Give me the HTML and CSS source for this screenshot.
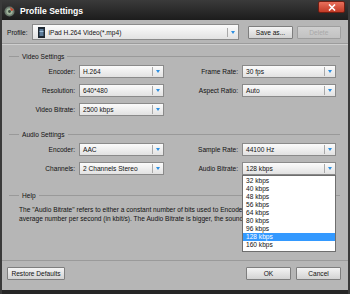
FILE: index.html
```html
<!DOCTYPE html>
<html lang="en">
<head>
    <meta charset="UTF-8">
    <title>Profile Settings</title>
    <link rel="stylesheet" href="styles.css">
</head>
<body>
<div class="window">
    <!-- Title bar -->
    <div class="titlebar">
        <svg class="app-icon" width="11" height="11" viewBox="0 0 11 11">
            <circle cx="5.5" cy="5.5" r="5" fill="#6b7a6e"/>
            <circle cx="5.5" cy="5.5" r="3.2" fill="#9fb39a"/>
            <circle cx="5.5" cy="5.5" r="1.4" fill="#3b4a3e"/>
            <path d="M6 1 L10 4 L7 5 Z" fill="#c9402a"/>
        </svg>
        <span class="title">Profile Settings</span>
        <div class="close-btn">
            <svg width="8" height="7" viewBox="0 0 8 7"><path d="M1 0.5 L7 6.5 M7 0.5 L1 6.5" stroke="#fff" stroke-width="1.6"/></svg>
        </div>
    </div>

    <div class="content">
        <!-- Profile -->
        <div class="profile-row">
            <span class="label">Profile:</span>
            <div class="select profile-select">
                <svg class="film" width="7" height="11" viewBox="0 0 7 11">
                    <rect width="7" height="11" fill="#1d2630"/>
                    <rect x="1.5" y="2" width="4" height="7" fill="#5b7a98"/>
                    <rect x="1.5" y="4" width="4" height="1" fill="#9fc0dc"/>
                </svg>
                <span class="value">iPad H.264 Video(*.mp4)</span>
                <span class="arrow"></span>
            </div>
            <button class="btn">Save as...</button>
            <button class="btn" disabled>Delete</button>
        </div>

        <!-- Video -->
        <div class="group">
            <div class="group-head"><span>Video Settings</span></div>
            <div class="grid">
                <span class="label">Encoder:</span>
                <div class="select"><span class="value">H.264</span><span class="arrow"></span></div>
                <span class="label">Frame Rate:</span>
                <div class="select"><span class="value">30 fps</span><span class="arrow"></span></div>

                <span class="label">Resolution:</span>
                <div class="select"><span class="value">640*480</span><span class="arrow"></span></div>
                <span class="label">Aspect Ratio:</span>
                <div class="select"><span class="value">Auto</span><span class="arrow"></span></div>

                <span class="label">Video Bitrate:</span>
                <div class="select"><span class="value">2500 kbps</span><span class="arrow"></span></div>
            </div>
        </div>

        <!-- Audio -->
        <div class="group audio">
            <div class="group-head"><span>Audio Settings</span></div>
            <div class="grid">
                <span class="label">Encoder:</span>
                <div class="select"><span class="value">AAC</span><span class="arrow"></span></div>
                <span class="label">Sample Rate:</span>
                <div class="select"><span class="value">44100 Hz</span><span class="arrow"></span></div>

                <span class="label">Channels:</span>
                <div class="select"><span class="value">2 Channels Stereo</span><span class="arrow"></span></div>
                <span class="label">Audio Bitrate:</span>
                <div class="select open">
                    <span class="value">128 kbps</span><span class="arrow"></span>
                    <ul class="dropdown">
                        <li>32 kbps</li>
                        <li>40 kbps</li>
                        <li>48 kbps</li>
                        <li>56 kbps</li>
                        <li>64 kbps</li>
                        <li>80 kbps</li>
                        <li>96 kbps</li>
                        <li class="selected">128 kbps</li>
                        <li>160 kbps</li>
                    </ul>
                </div>
            </div>
        </div>

        <!-- Help -->
        <div class="group help">
            <div class="group-head"><span>Help</span></div>
            <p class="help-text">The "Audio Bitrate" refers to either a constant number of bits used to Encode, or an<br>average number per second (in kbit/s). The Audio Bitrate is bigger, the sound quality is better.</p>
        </div>
    </div>

    <!-- Footer -->
    <div class="footer">
        <button class="btn wide">Restore Defaults</button>
        <div class="spacer"></div>
        <button class="btn">OK</button>
        <button class="btn">Cancel</button>
    </div>
</div>
</body>
</html>
```

FILE: styles.css
```css
body {
    margin: 0;
    background: #1e1e1e;
    font-family: "Liberation Sans", Arial, sans-serif;
    font-size: 6.6px;
    color: #111;
}
.window {
    width: 350px;
    height: 294px;
    display: flex;
    flex-direction: column;
    background: #b6b6b6;
    border-left: 2px solid #3a3a3a;
    border-right: 2px solid #3a3a3a;
    box-sizing: border-box;
    overflow: hidden;
}
.titlebar {
    height: 20px;
    flex: none;
    display: flex;
    align-items: center;
    margin: 0 -2px;
    padding: 0 4px;
    background: linear-gradient(#3a3a3a, #1c1c1c);
    position: relative;
}
.app-icon {
    margin-top: 2px;
}
.title {
    margin-left: 5px;
    color: #fff;
    font-weight: bold;
    font-size: 8.6px;
    margin-top: 1px;
}
.close-btn {
    position: absolute;
    right: 5px;
    top: 1px;
    width: 27px;
    height: 12px;
    border-radius: 2px;
    background: linear-gradient(#e8705c, #c13a26);
    border: 1px solid #6e1d12;
    box-sizing: border-box;
    display: flex;
    align-items: center;
    justify-content: center;
}
.content {
    flex: 1;
    display: flex;
    flex-direction: column;
}
.profile-row {
    display: flex;
    align-items: center;
    height: 22px;
    padding: 1px 7px 0 5px;
    border-bottom: 1px solid #9c9c9c;
    box-shadow: 0 1px 0 #cfcfcf;
}
.profile-row .label {
    margin-right: 4px;
}
.select {
    height: 13px;
    display: flex;
    align-items: center;
    background: linear-gradient(#fbfbfb, #e2e2e2);
    border: 1px solid #8a8a8a;
    box-sizing: border-box;
    position: relative;
}
.select .value {
    flex: 1;
    padding-left: 3px;
    white-space: nowrap;
}
.select .arrow {
    width: 10px;
    height: 9px;
    border-left: 1px solid #a9a9a9;
    position: relative;
}
.select .arrow::after {
    content: "";
    position: absolute;
    left: 3px;
    top: 3px;
    border-left: 2.5px solid transparent;
    border-right: 2.5px solid transparent;
    border-top: 3px solid #2d8fe0;
}
.profile-select {
    width: 211px;
    height: 16px;
    margin-right: 5px;
}
.profile-select .film {
    margin-left: 5px;
}
.profile-select .value {
    padding-left: 4px;
}
.btn {
    font-family: inherit;
    font-size: 6.6px;
    color: #111;
    width: 45px;
    height: 13px;
    padding: 0;
    margin-left: 4px;
    background: linear-gradient(#f4f4f4, #d3d3d3);
    border: 1px solid #7e7e7e;
    border-radius: 1px;
}
.btn:disabled {
    color: #a8a8a8;
    background: linear-gradient(#cfcfcf, #c2c2c2);
    border-color: #9e9e9e;
}
.group {
    padding: 0 8px 0 7px;
}
.group-head {
    display: flex;
    align-items: center;
    height: 10px;
    margin-top: 7px;
}
.group-head::before {
    content: "";
    width: 10px;
    border-top: 1px solid #999;
    margin-right: 3px;
}
.group-head::after {
    content: "";
    flex: 1;
    border-top: 1px solid #999;
    margin-left: 3px;
}
.grid {
    display: grid;
    grid-template-columns: 66px 85px 70px 94px;
    column-gap: 4px;
    row-gap: 6px;
    margin-top: 4px;
    align-items: center;
}
.grid .label {
    text-align: right;
}
.audio .group-head {
    margin-top: 13px;
}
.help .group-head {
    margin-top: 15px;
}
.help-text {
    margin: 5px 0 0 10px;
    line-height: 9px;
    white-space: nowrap;
}
.dropdown {
    position: absolute;
    left: -1px;
    top: 12px;
    width: 94px;
    margin: 0;
    padding: 1px 0 2px;
    list-style: none;
    background: #fff;
    border: 1px solid #6e6e6e;
    box-sizing: border-box;
    z-index: 2;
}
.dropdown li {
    height: 8px;
    line-height: 8px;
    padding-left: 3px;
}
.dropdown .selected {
    background: #3399ff;
    color: #fff;
}
.footer {
    flex: none;
    display: flex;
    align-items: center;
    height: 25px;
    padding: 0 9px 4px 7px;
    border-top: 1px solid #9a9a9a;
    border-bottom: 4px solid #262626;
    margin: 0 -2px;
}
.footer .btn {
    margin-left: 5px;
}
.footer .btn.wide {
    width: 58px;
    margin-left: 0;
}
.spacer {
    flex: 1;
}
```
